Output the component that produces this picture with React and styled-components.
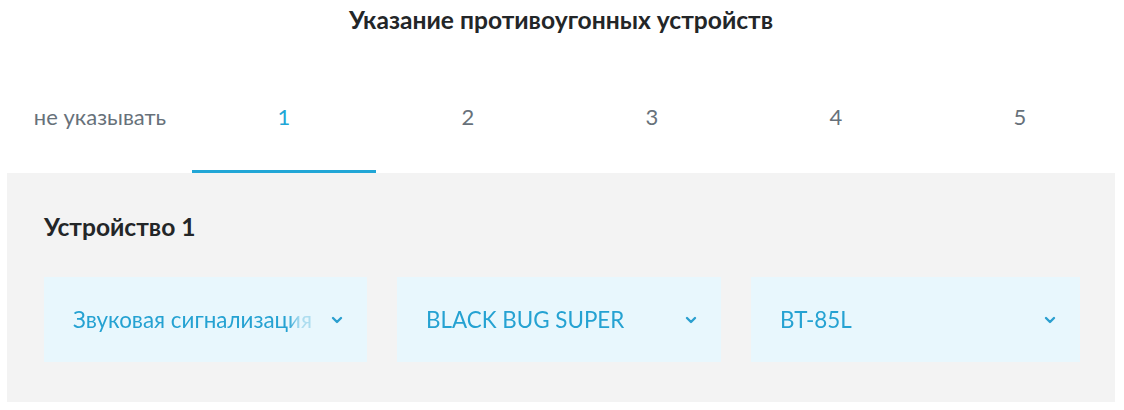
import styled, { createGlobalStyle } from 'styled-components';

const GlobalStyle = createGlobalStyle`
  body {
    margin: 0;
    background: #ffffff;
    font-family: Lato, "Noto Sans", sans-serif;
  }
`;

const Page = styled.div`
  width: 1124px;
  padding: 0 9px 0 7px;
  box-sizing: border-box;
`;

const Title = styled.h2`
  margin: 0;
  padding-top: 4px;
  height: 86px;
  box-sizing: border-box;
  text-align: center;
  font-size: 24.6px;
  font-weight: 700;
  color: #232628;
  line-height: 32px;
`;

const Tabs = styled.div`
  display: grid;
  grid-template-columns: repeat(6, 184px);
  padding-left: 1px;
`;

const Tab = styled.div`
  height: 87px;
  display: flex;
  align-items: center;
  justify-content: center;
  padding-bottom: 24px;
  box-sizing: border-box;
  font-size: 22px;
  color: ${(p) => (p.$active ? '#21a6d6' : '#67717a')};
  border-bottom: 3px solid ${(p) => (p.$active ? '#21a6d6' : 'transparent')};
  cursor: pointer;
`;

const Panel = styled.div`
  background: #f3f3f3;
  padding: 39px 35px 40px 37px;
  height: 229px;
  box-sizing: border-box;
`;

const DeviceTitle = styled.h3`
  margin: 0 0 35px;
  font-size: 24.6px;
  font-weight: 700;
  color: #232628;
  line-height: 30px;
`;

const Row = styled.div`
  display: grid;
  grid-template-columns: 323px 324px 1fr;
  gap: 30px;
`;

const Select = styled.div`
  height: 85px;
  background: #e8f7fd;
  display: flex;
  align-items: center;
  padding: 0 24px 0 29px;
  box-sizing: border-box;
  gap: 14px;
  cursor: pointer;
`;

const Value = styled.span`
  flex: 1;
  min-width: 0;
  white-space: nowrap;
  overflow: hidden;
  font-size: 22.4px;
  color: #25a2d2;
  -webkit-mask-image: linear-gradient(to right, #000 88%, rgba(0, 0, 0, 0.3) 93%, rgba(0, 0, 0, 0.3) 100%);
  mask-image: linear-gradient(to right, #000 88%, rgba(0, 0, 0, 0.3) 93%, rgba(0, 0, 0, 0.3) 100%);
`;

const Chevron = () => (
  <svg width="12" height="8" viewBox="0 0 12 8" fill="none">
    <path d="M2 2l4 4 4-4" stroke="#2b9fcf" strokeWidth="2.4" strokeLinecap="round" strokeLinejoin="round" />
  </svg>
);

const tabs = ['не указывать', '1', '2', '3', '4', '5'];
const selects = ['Звуковая сигнализация', 'BLACK BUG SUPER', 'BT-85L'];

export default function App() {
  return (
    <Page>
      <GlobalStyle />
      <Title>Указание противоугонных устройств</Title>
      <Tabs>
        {tabs.map((t, i) => (
          <Tab key={t} $active={i === 1}>{t}</Tab>
        ))}
      </Tabs>
      <Panel>
        <DeviceTitle>Устройство 1</DeviceTitle>
        <Row>
          {selects.map((s) => (
            <Select key={s}>
              <Value>{s}</Value>
              <Chevron />
            </Select>
          ))}
        </Row>
      </Panel>
    </Page>
  );
}
